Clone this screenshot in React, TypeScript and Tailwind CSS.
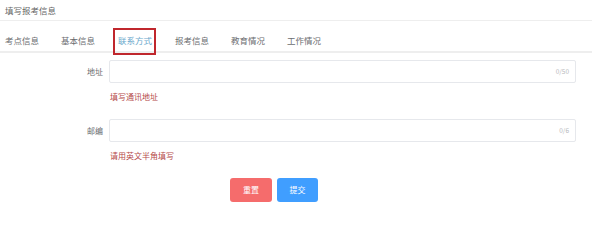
import React from "react";

const tabs = ["考点信息", "基本信息", "联系方式", "报考信息", "教育情况", "工作情况"];

const fields = [
  { label: "地址", count: "0/50", hint: "填写通讯地址" },
  { label: "邮编", count: "0/6", hint: "请用英文半角填写" },
];

export default function App() {
  return (
    <div
      className="w-[600px] h-[213px] bg-white overflow-hidden text-[#6b6d70]"
      style={{ fontFamily: '"Noto Sans CJK SC", "Liberation Sans", sans-serif' }}
    >
      {/* header */}
      <div className="mr-[8px] h-[21px] border-b border-[#eeeeee] pl-[5px] flex items-center text-[8.5px] text-[#666]">
        填写报考信息
      </div>

      {/* tabs */}
      <div className="mr-[8px] mt-[9px] h-[23px] border-b-2 border-[#eeeeee] flex items-stretch pl-[5px] gap-[22px] text-[8.5px]">
        {tabs.map((t, i) => (
          <div key={t} className="relative flex items-start pt-[4px]">
            <span className={i === 2 ? "text-[#6aa8cc] border-b-2 border-[#6a9fb2] pb-[4px] px-[1px] h-[21px]" : "text-[#6b6d70]"}>{t}</span>
            {i === 2 && (
              <div className="absolute left-[-4px] right-[-3px] top-[-2px] bottom-[-4px] border-2 border-[#c0272d]" />
            )}
          </div>
        ))}
      </div>

      {/* form */}
      <div className="mt-[7px] flex flex-col gap-[16px]">
        {fields.map((f) => (
          <div key={f.label} className="flex flex-col">
            <div className="flex items-center">
              <div className="w-[109px] pr-[6px] text-right text-[8px] text-[#6b6d70]">{f.label}</div>
              <div className="w-[467px] h-[23px] border border-[#e6e8ec] rounded-[2px] flex items-center justify-end pr-[6px]">
                <span className="text-[6.5px] text-[#b8babe]">{f.count}</span>
              </div>
            </div>
            <div className="ml-[110px] mt-[8px] text-[8px] text-[#b54a4a]">{f.hint}</div>
          </div>
        ))}
      </div>

      {/* buttons */}
      <div className="mt-[16px] ml-[230px] flex gap-[5px]">
        <button className="w-[42px] h-[24px] rounded-[3px] bg-[#f56c6c] text-white text-[8px]">重置</button>
        <button className="w-[41px] h-[24px] rounded-[3px] bg-[#409eff] text-white text-[8px]">提交</button>
      </div>
    </div>
  );
}
